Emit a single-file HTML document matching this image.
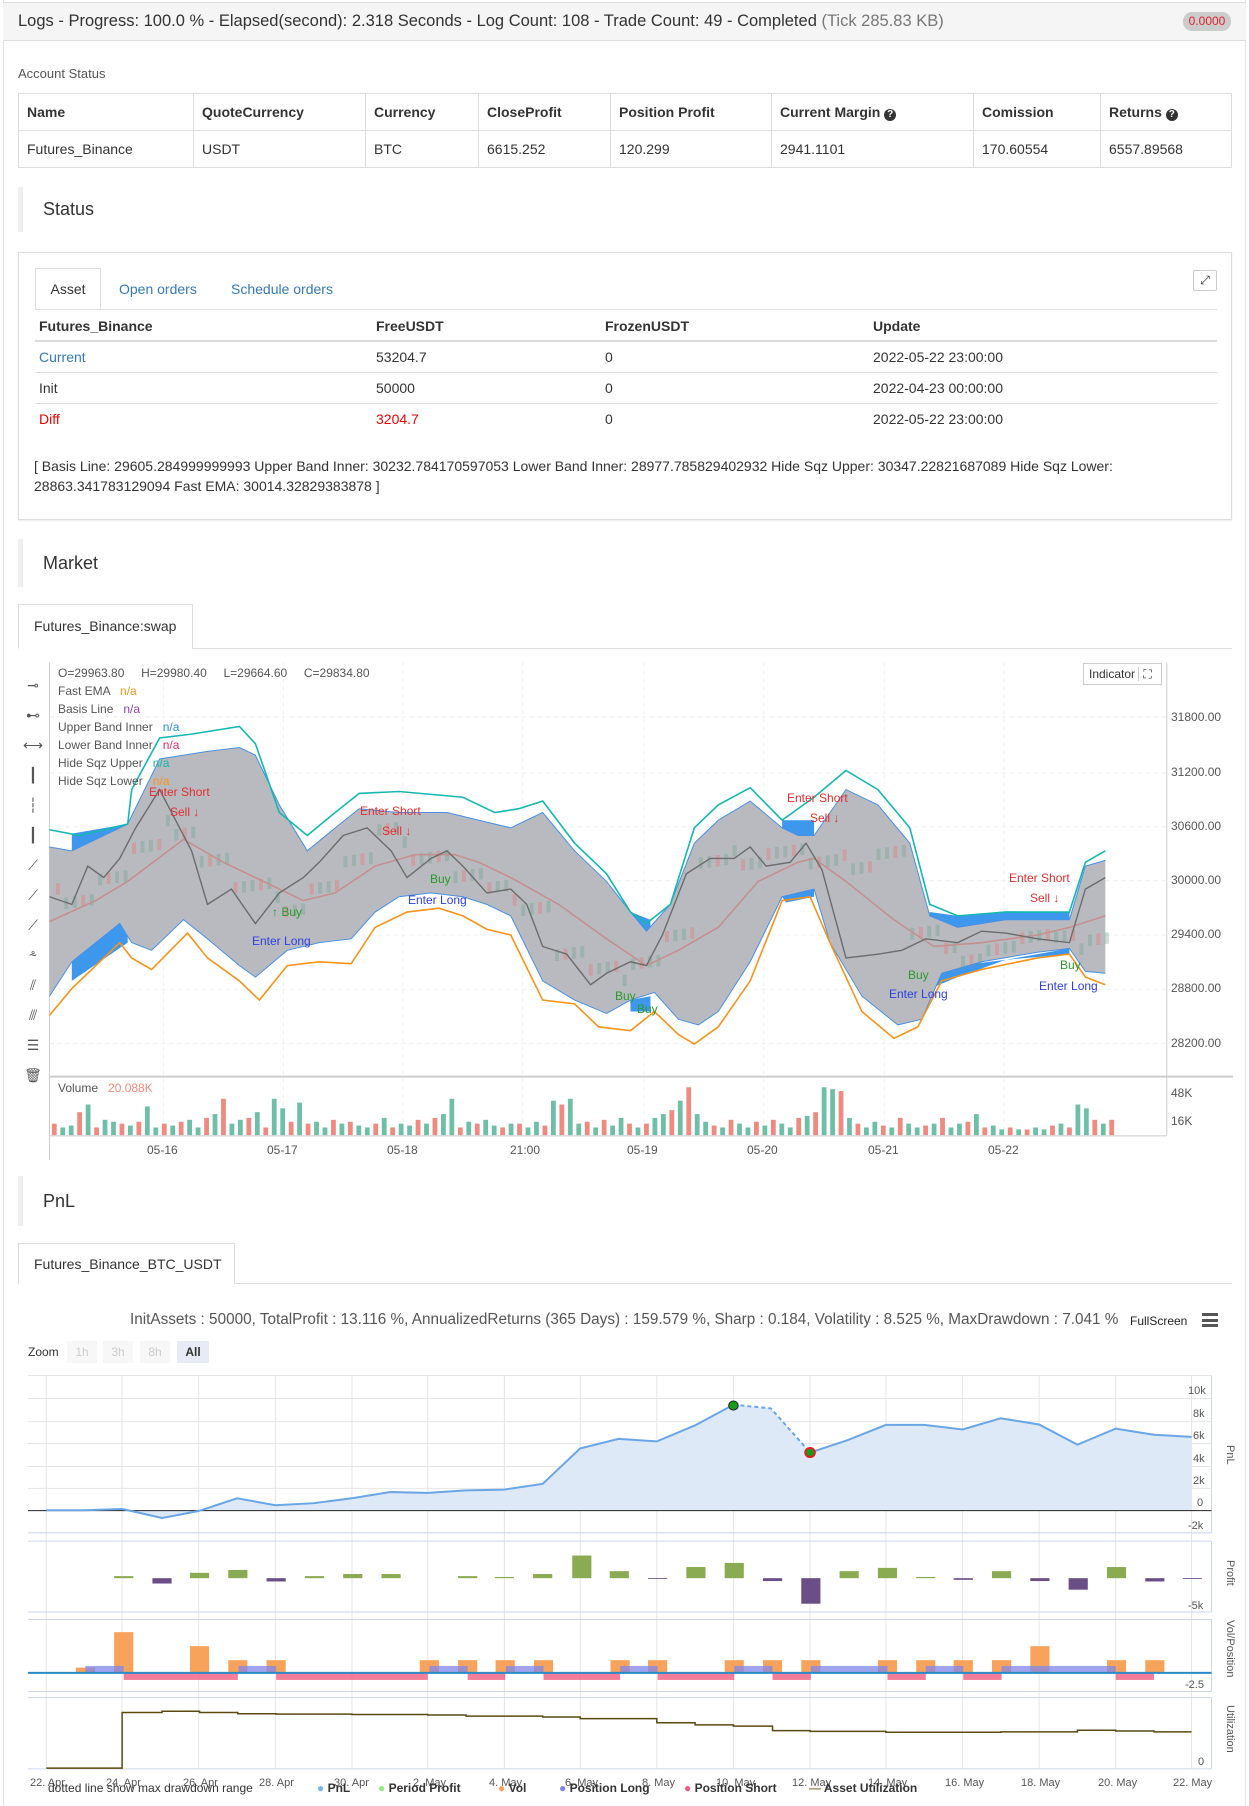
<!DOCTYPE html>
<html><head><meta charset="utf-8"><style>
*{box-sizing:border-box;margin:0;padding:0}
html,body{overflow:hidden}
body{width:1249px;height:1806px;position:relative;font-family:"Liberation Sans",Arial,sans-serif;color:#333;background:#fff;font-size:14px}
.a{position:absolute;white-space:nowrap}
table{border-collapse:collapse}
.t1{position:absolute;left:18px;top:93px;width:1214px;border:1px solid #ddd;font-size:14px}
.t1 td{border:1px solid #ddd;height:37px;padding-left:8px}
.t1 tr:first-child td{font-weight:bold}
.hd{position:absolute;left:18px;width:1214px;border-left:5px solid #eee;font-size:18px;padding-left:20px}
.cl{font-size:12px;color:#555}
.ax{font-size:12px;color:#555}
.xl{position:absolute;top:1777px;font-size:11px;color:#555;white-space:nowrap}
.lg{position:absolute;top:1781px;font-size:12px;font-weight:bold;color:#333;white-space:nowrap}
</style></head><body>
<div class="a" style="left:3px;top:0;width:1243px;height:1806px;border-left:1px solid #e3e3e3;border-right:1px solid #e3e3e3"></div>
<div class="a" style="left:3px;top:2px;width:1243px;height:39px;background:#f5f5f5;border-bottom:1px solid #ddd;border-top:1px solid #ddd"></div>
<div class="a" style="left:18px;top:12px;font-size:16.5px;color:#333">Logs - Progress: 100.0 % - Elapsed(second): 2.318 Seconds - Log Count: 108 - Trade Count: 49 - Completed <span style="color:#777">(Tick 285.83 KB)</span></div>
<div class="a" style="left:1183px;top:12px;width:48px;height:19px;background:#ccc;border-radius:9px;color:#d9262e;font-size:12px;text-align:center;line-height:19px">0.0000</div>
<div class="a" style="left:18px;top:66px;font-size:13px;color:#555">Account Status</div>
<table class="t1"><tr><td style="width:175px">Name</td><td style="width:172px">QuoteCurrency</td><td style="width:113px">Currency</td><td style="width:132px">CloseProfit</td><td style="width:161px">Position Profit</td><td style="width:202px">Current Margin <span style="display:inline-block;width:12px;height:12px;border-radius:6px;background:#333;color:#fff;font-size:10px;text-align:center;line-height:12px">?</span></td><td style="width:127px">Comission</td><td>Returns <span style="display:inline-block;width:12px;height:12px;border-radius:6px;background:#333;color:#fff;font-size:10px;text-align:center;line-height:12px">?</span></td></tr>
<tr><td>Futures_Binance</td><td>USDT</td><td>BTC</td><td>6615.252</td><td>120.299</td><td>2941.1101</td><td>170.60554</td><td>6557.89568</td></tr></table>
<div class="hd" style="top:187px;height:45px;line-height:45px">Status</div>
<div class="a" style="left:18px;top:252px;width:1214px;height:268px;border:1px solid #ddd;box-shadow:0 1px 2px rgba(0,0,0,.08)"></div>
<div class="a" style="left:35px;top:268px;width:66px;height:42px;border:1px solid #ddd;border-bottom:1px solid #fff;background:#fff;text-align:center;line-height:40px">Asset</div>
<div class="a" style="left:35px;top:309px;width:1182px;border-top:1px solid #ddd"></div>
<div class="a" style="left:119px;top:281px;color:#337ab7">Open orders</div>
<div class="a" style="left:231px;top:281px;color:#337ab7">Schedule orders</div>
<div class="a" style="left:1193px;top:270px;width:24px;height:21px;border:1px solid #ccc;border-radius:2px;font-size:12px;text-align:center;line-height:19px">⤢</div>
<div class="a" style="left:39px;top:318px;font-weight:bold">Futures_Binance</div>
<div class="a" style="left:376px;top:318px;font-weight:bold">FreeUSDT</div>
<div class="a" style="left:605px;top:318px;font-weight:bold">FrozenUSDT</div>
<div class="a" style="left:873px;top:318px;font-weight:bold">Update</div>
<div class="a" style="left:35px;top:340px;width:1182px;border-top:2px solid #ddd"></div>
<div class="a" style="left:39px;top:349px;color:#337ab7">Current</div><div class="a" style="left:376px;top:349px">53204.7</div><div class="a" style="left:605px;top:349px">0</div><div class="a" style="left:873px;top:349px">2022-05-22 23:00:00</div>
<div class="a" style="left:35px;top:372px;width:1182px;border-top:1px solid #ddd"></div>
<div class="a" style="left:39px;top:380px">Init</div><div class="a" style="left:376px;top:380px">50000</div><div class="a" style="left:605px;top:380px">0</div><div class="a" style="left:873px;top:380px">2022-04-23 00:00:00</div>
<div class="a" style="left:35px;top:403px;width:1182px;border-top:1px solid #ddd"></div>
<div class="a" style="left:39px;top:411px;color:#e00">Diff</div><div class="a" style="left:376px;top:411px;color:#e00">3204.7</div><div class="a" style="left:605px;top:411px">0</div><div class="a" style="left:873px;top:411px">2022-05-22 23:00:00</div>
<div class="a" style="left:34px;top:456px;font-size:14px;line-height:20px">[ Basis Line: 29605.284999999993 Upper Band Inner: 30232.784170597053 Lower Band Inner: 28977.785829402932 Hide Sqz Upper: 30347.22821687089 Hide Sqz Lower:<br>28863.341783129094 Fast EMA: 30014.32829383878 ]</div>
<div class="hd" style="top:539px;height:48px;line-height:48px">Market</div>
<div class="a" style="left:18px;top:604px;width:175px;height:45px;border:1px solid #ddd;border-bottom:1px solid #fff;background:#fff;line-height:43px;padding-left:15px">Futures_Binance:swap</div>
<div class="a" style="left:192px;top:648px;width:1040px;border-top:1px solid #ddd"></div>

<svg class="a" style="left:0;top:560px" width="1249" height="600" viewBox="0 0 1565 1568" preserveAspectRatio="none">
<g stroke="#eee" stroke-dasharray="4 4">
<line x1="62" x2="1462" y1="410" y2="410" vector-effect="non-scaling-stroke"/><line x1="62" x2="1462" y1="557" y2="557" vector-effect="non-scaling-stroke"/><line x1="62" x2="1462" y1="697" y2="697" vector-effect="non-scaling-stroke"/><line x1="62" x2="1462" y1="838" y2="838" vector-effect="non-scaling-stroke"/><line x1="62" x2="1462" y1="980" y2="980" vector-effect="non-scaling-stroke"/><line x1="62" x2="1462" y1="1122" y2="1122" vector-effect="non-scaling-stroke"/><line x1="62" x2="1462" y1="1264" y2="1264" vector-effect="non-scaling-stroke"/>
<line x1="205" x2="205" y1="268" y2="1505" vector-effect="non-scaling-stroke"/><line x1="355" x2="355" y1="268" y2="1505" vector-effect="non-scaling-stroke"/><line x1="505" x2="505" y1="268" y2="1505" vector-effect="non-scaling-stroke"/><line x1="655" x2="655" y1="268" y2="1505" vector-effect="non-scaling-stroke"/><line x1="807" x2="807" y1="268" y2="1505" vector-effect="non-scaling-stroke"/><line x1="957" x2="957" y1="268" y2="1505" vector-effect="non-scaling-stroke"/><line x1="1108" x2="1108" y1="268" y2="1505" vector-effect="non-scaling-stroke"/><line x1="1258" x2="1258" y1="268" y2="1505" vector-effect="non-scaling-stroke"/>
</g>
<line x1="62" x2="62" y1="268" y2="1568" stroke="#ccc" vector-effect="non-scaling-stroke"/>
<line x1="1462" x2="1462" y1="268" y2="1505" stroke="#ccc" vector-effect="non-scaling-stroke"/>
<line x1="62" x2="1545" y1="1350" y2="1350" stroke="#ccc" stroke-width="2" vector-effect="non-scaling-stroke"/>
<line x1="62" x2="1462" y1="1505" y2="1505" stroke="#ccc" vector-effect="non-scaling-stroke"/>
<polygon fill="#3d97ec" points="90,715 160,690 160,745 90,770"/>
<polygon fill="#3d97ec" points="90,1050 120,1000 150,950 160,950 160,1000 90,1100"/>
<polygon fill="#3d97ec" points="790,920 815,940 815,985 790,960"/>
<polygon fill="#3d97ec" points="790,1150 815,1140 815,1180 790,1180"/>
<polygon fill="#3d97ec" points="980,680 1020,680 1020,725 980,720"/>
<polygon fill="#3d97ec" points="980,880 1020,850 1020,880 985,895"/>
<polygon fill="#3d97ec" points="1165,920 1200,930 1260,918 1340,920 1340,942 1260,940 1200,970 1165,950"/>
<polygon fill="#3d97ec" points="1165,1090 1200,1060 1260,1045 1340,1015 1340,1030 1260,1045 1200,1090 1165,1120"/>
<polygon fill="#b8bac0" points="62,750 90,760 160,690 200,520 260,500 300,490 320,510 350,640 385,760 420,700 450,650 500,660 560,660 600,680 640,700 680,660 720,760 760,840 790,920 810,970 840,900 870,740 900,680 940,630 980,700 1000,720 1020,720 1060,600 1100,640 1140,740 1165,930 1200,960 1260,940 1340,940 1360,800 1385,785 1385,1080 1360,1075 1340,1015 1300,1025 1230,1050 1180,1080 1155,1200 1125,1215 1080,1140 1040,1000 1020,860 980,880 940,1050 900,1180 875,1215 850,1200 820,1130 790,1150 760,1185 720,1150 680,1100 640,930 610,900 580,880 540,870 500,880 470,920 440,990 400,1000 360,1020 320,1090 300,1060 260,990 230,940 190,1020 165,1000 150,950 120,1000 90,1050 62,1140"/>
<g id="cand"></g>
<g fill="none">
<polyline stroke="#4a90e2" stroke-width="1" vector-effect="non-scaling-stroke" points="62,750 90,760 160,690 200,520 260,500 300,490 320,510 350,640 385,760 420,700 450,650 500,660 560,660 600,680 640,700 680,660 720,760 760,840 790,920 810,970 840,900 870,740 900,680 940,630 980,700 1000,720 1020,720 1060,600 1100,640 1140,740 1165,930 1200,960 1260,940 1340,940 1360,800 1385,785"/>
<polyline stroke="#4a90e2" stroke-width="1" vector-effect="non-scaling-stroke" points="62,1140 90,1050 120,1000 150,950 165,1000 190,1020 230,940 260,990 300,1060 320,1090 360,1020 400,1000 440,990 470,920 500,880 540,870 580,880 610,900 640,930 680,1100 720,1150 760,1185 790,1150 820,1130 850,1200 875,1215 900,1180 940,1050 980,880 1020,860 1040,1000 1080,1140 1125,1215 1155,1200 1180,1080 1230,1050 1300,1025 1340,1015 1360,1075 1385,1080"/>
<polyline stroke="#14b8b0" stroke-width="1.6" vector-effect="non-scaling-stroke" points="62,705 100,720 160,690 165,600 200,465 240,455 300,435 320,480 350,660 385,720 420,660 450,610 500,605 580,620 620,660 650,650 680,630 720,740 760,820 790,920 810,950 840,900 870,700 900,640 940,595 980,680 1020,620 1060,550 1100,600 1140,700 1165,900 1200,930 1260,920 1340,920 1360,790 1385,760"/>
<polyline stroke="#f7931a" stroke-width="1.6" vector-effect="non-scaling-stroke" points="62,1190 90,1120 120,1060 150,1000 165,1040 190,1070 235,975 260,1040 300,1100 325,1150 360,1060 400,1050 440,1055 470,960 510,920 550,910 580,930 610,965 640,980 680,1150 720,1160 750,1220 790,1230 820,1180 850,1240 870,1265 900,1220 940,1100 980,890 1015,880 1040,1000 1080,1180 1120,1250 1150,1220 1180,1100 1230,1070 1300,1040 1340,1030 1360,1090 1385,1110"/>
<polyline stroke="#c49090" stroke-width="1.6" vector-effect="non-scaling-stroke" points="62,945 120,890 160,840 230,730 280,790 340,850 380,890 420,870 470,800 520,770 570,770 600,790 640,830 700,900 760,990 810,1060 850,1020 900,960 950,840 1000,790 1020,780 1060,840 1120,940 1170,1010 1230,1000 1300,980 1340,960 1385,930"/>
<polyline stroke="#6c6c6c" stroke-width="1.4" vector-effect="non-scaling-stroke" points="62,880 90,900 110,800 130,830 150,780 170,700 200,600 220,680 240,760 260,900 290,860 320,950 350,870 380,830 400,790 430,720 460,700 490,760 510,830 540,780 560,760 580,800 610,870 640,860 660,900 680,1010 710,1030 740,1110 760,1080 790,1050 810,1060 830,980 860,820 890,780 920,780 940,750 960,800 990,790 1010,740 1030,810 1060,1040 1100,1030 1130,1020 1160,990 1200,1000 1230,970 1260,975 1300,990 1340,1000 1360,860 1385,830"/>
</g>
<g id="vol"></g>
</svg>
<div class="a cl" style="left:58px;top:666px">O=29963.80&nbsp;&nbsp;&nbsp;&nbsp;&nbsp;H=29980.40&nbsp;&nbsp;&nbsp;&nbsp;&nbsp;L=29664.60&nbsp;&nbsp;&nbsp;&nbsp;&nbsp;C=29834.80</div>
<div class="a cl" style="left:58px;top:684px">Fast EMA &nbsp;&nbsp;<span style="color:#f7931a">n/a</span></div>
<div class="a cl" style="left:58px;top:702px">Basis Line &nbsp;&nbsp;<span style="color:#8e44ad">n/a</span></div>
<div class="a cl" style="left:58px;top:720px">Upper Band Inner &nbsp;&nbsp;<span style="color:#2a8bf2">n/a</span></div>
<div class="a cl" style="left:58px;top:738px">Lower Band Inner &nbsp;&nbsp;<span style="color:#e0306a">n/a</span></div>
<div class="a cl" style="left:58px;top:756px">Hide Sqz Upper &nbsp;&nbsp;<span style="color:#14b8b0">n/a</span></div>
<div class="a cl" style="left:58px;top:774px">Hide Sqz Lower &nbsp;&nbsp;<span style="color:#f7931a">n/a</span></div>
<div class="a" style="left:1083px;top:663px;width:79px;height:22px;border:1px solid #ccc;font-size:12px;line-height:20px;padding-left:5px;background:#fff">Indicator <span style="border-left:1px solid #ccc;padding-left:4px">⛶</span></div>
<div class="a ax" style="left:1171px;top:710px">31800.00</div><div class="a ax" style="left:1171px;top:765px">31200.00</div><div class="a ax" style="left:1171px;top:819px">30600.00</div><div class="a ax" style="left:1171px;top:873px">30000.00</div><div class="a ax" style="left:1171px;top:927px">29400.00</div><div class="a ax" style="left:1171px;top:981px">28800.00</div><div class="a ax" style="left:1171px;top:1036px">28200.00</div>
<div class="a ax" style="left:1171px;top:1086px">48K</div><div class="a ax" style="left:1171px;top:1114px">16K</div>
<div class="a ax" style="left:58px;top:1081px">Volume &nbsp;&nbsp;<span style="color:#ef8a80">20.088K</span></div>
<div class="a ax" style="left:147px;top:1143px">05-16</div><div class="a ax" style="left:267px;top:1143px">05-17</div><div class="a ax" style="left:387px;top:1143px">05-18</div><div class="a ax" style="left:510px;top:1143px">21:00</div><div class="a ax" style="left:627px;top:1143px">05-19</div><div class="a ax" style="left:747px;top:1143px">05-20</div><div class="a ax" style="left:868px;top:1143px">05-21</div><div class="a ax" style="left:988px;top:1143px">05-22</div>
<div class="a" style="font-size:12px;color:#e03030;left:149px;top:785px">Enter Short</div>
<div class="a" style="font-size:12px;color:#e03030;left:170px;top:805px">Sell ↓</div>
<div class="a" style="font-size:12px;color:#e03030;left:360px;top:804px">Enter Short</div>
<div class="a" style="font-size:12px;color:#e03030;left:382px;top:824px">Sell ↓</div>
<div class="a" style="font-size:12px;color:#e03030;left:787px;top:791px">Enter Short</div>
<div class="a" style="font-size:12px;color:#e03030;left:810px;top:811px">Sell ↓</div>
<div class="a" style="font-size:12px;color:#e03030;left:1009px;top:871px">Enter Short</div>
<div class="a" style="font-size:12px;color:#e03030;left:1030px;top:891px">Sell ↓</div>
<div class="a" style="font-size:12px;color:#2a9a2a;left:272px;top:905px">↑ Buy</div>
<div class="a" style="font-size:12px;color:#3040e0;left:252px;top:934px">Enter Long</div>
<div class="a" style="font-size:12px;color:#2a9a2a;left:430px;top:872px">Buy</div>
<div class="a" style="font-size:12px;color:#3040e0;left:408px;top:893px">Enter Long</div>
<div class="a" style="font-size:12px;color:#2a9a2a;left:615px;top:989px">Buy</div>
<div class="a" style="font-size:12px;color:#2a9a2a;left:637px;top:1002px">Buy</div>
<div class="a" style="font-size:12px;color:#2a9a2a;left:908px;top:968px">Buy</div>
<div class="a" style="font-size:12px;color:#3040e0;left:889px;top:987px">Enter Long</div>
<div class="a" style="font-size:12px;color:#2a9a2a;left:1060px;top:958px">Buy</div>
<div class="a" style="font-size:12px;color:#3040e0;left:1039px;top:979px">Enter Long</div>
<div class="a" style="left:22px;top:670px;font-size:14px;color:#555;line-height:30px;width:22px;text-align:center">⊸<br>⊷<br>⟷<br>┃<br>┆<br>┃<br>⟋<br>⟋<br>⟋<br>⸛<br>⫽<br>⫻<br>☰<br>🗑</div>

<div class="hd" style="top:1176px;height:50px;line-height:50px">PnL</div>
<div class="a" style="left:18px;top:1243px;width:217px;height:42px;border:1px solid #ddd;border-bottom:1px solid #fff;background:#fff;line-height:40px;padding-left:15px">Futures_Binance_BTC_USDT</div>
<div class="a" style="left:234px;top:1283px;width:998px;border-top:1px solid #ddd"></div>
<div class="a" style="left:130px;top:1311px;font-size:15.3px;color:#555">InitAssets : 50000, TotalProfit : 13.116 %, AnnualizedReturns (365 Days) : 159.579 %, Sharp : 0.184, Volatility : 8.525 %, MaxDrawdown : 7.041 %</div>
<div class="a" style="left:1130px;top:1314px;font-size:12px;color:#222">FullScreen</div>
<div class="a" style="left:1202px;top:1313px;width:16px;height:14px;border-top:3px solid #555;border-bottom:3px solid #555"><div style="margin-top:3px;border-top:3px solid #555"></div></div>
<div class="a" style="left:28px;top:1345px;font-size:12px;color:#333">Zoom</div>
<div class="a" style="left:67px;top:1341px;width:30px;height:22px;background:#f7f7f7;color:#ccc;font-size:12px;text-align:center;line-height:22px">1h</div>
<div class="a" style="left:103px;top:1341px;width:30px;height:22px;background:#f7f7f7;color:#ccc;font-size:12px;text-align:center;line-height:22px">3h</div>
<div class="a" style="left:140px;top:1341px;width:30px;height:22px;background:#f7f7f7;color:#ccc;font-size:12px;text-align:center;line-height:22px">8h</div>
<div class="a" style="left:177px;top:1341px;width:32px;height:22px;background:#e6ebf5;color:#333;font-size:12px;font-weight:bold;text-align:center;line-height:22px">All</div>
<svg class="a" style="left:0;top:1160px" width="1249" height="646" viewBox="0 0 1565 1568" preserveAspectRatio="none">
<g stroke="#e6e6e6" fill="none">
<path vector-effect="non-scaling-stroke" d="M58 523V1478M153 523V1478M249 523V1478M345 523V1478M441 523V1478M536 523V1478M632 523V1478M727 523V1478M823 523V1478M919 523V1478M1015 523V1478M1110 523V1478M1206 523V1478M1302 523V1478M1398 523V1478M1493 523V1478"/>
<path vector-effect="non-scaling-stroke" d="M35 523H1518M35 579H1518M35 635H1518M35 688H1518M35 744H1518M35 797H1518M35 905H1518"/>
</g>
<g stroke="#ccd6eb" fill="none"><path vector-effect="non-scaling-stroke" d="M1518 523V905M1518 925V1097M1518 1115V1290M1518 1305V1478M35 905H1518M35 1097H1518M35 1290H1518M35 1478H1518M35 925H1518M35 1115H1518M35 1305H1518"/></g>
<polygon fill="#dde9f7" points="58,850 105,850 153,847 203,869 249,852 297,821 345,838 393,833 441,821 489,806 536,808 584,802 632,800 680,786 727,700 775,677 823,683 871,644 919,594 966,603 1015,710 1062,680 1110,643 1158,643 1206,654 1254,627 1302,642 1350,691 1398,652 1446,667 1493,672 1493,851 58,851"/>
<line x1="35" x2="1518" y1="851" y2="851" stroke="#222" vector-effect="non-scaling-stroke"/>
<polyline fill="none" stroke="#6aa5e6" stroke-width="2" vector-effect="non-scaling-stroke" points="58,850 105,850 153,847 203,869 249,852 297,821 345,838 393,833 441,821 489,806 536,808 584,802 632,800 680,786 727,700 775,677 823,683 871,644 919,594"/>
<polyline fill="none" stroke="#6aa5e6" stroke-width="2" stroke-dasharray="4 3" vector-effect="non-scaling-stroke" points="919,594 966,603 1015,710"/>
<polyline fill="none" stroke="#6aa5e6" stroke-width="2" vector-effect="non-scaling-stroke" points="1015,710 1062,680 1110,643 1158,643 1206,654 1254,627 1302,642 1350,691 1398,652 1446,667 1493,672"/>
<ellipse cx="919" cy="596" rx="6" ry="11" fill="#1a9a1a" stroke="#222" vector-effect="non-scaling-stroke"/>
<ellipse cx="1015" cy="710" rx="6" ry="11" fill="#1a9a1a" stroke="#d22" stroke-width="2" vector-effect="non-scaling-stroke"/>
<g id="prof"></g>
<g id="volp"></g>
<line x1="35" x2="1518" y1="1245" y2="1245" stroke="#2a8bc8" stroke-width="2" vector-effect="non-scaling-stroke"/>
<polyline fill="none" stroke="#5a4a10" stroke-width="1.5" vector-effect="non-scaling-stroke" points="58,1476 153,1476 153,1341 203,1341 203,1338 250,1338 250,1341 298,1341 298,1344 346,1344 346,1345 441,1345 441,1346 536,1346 536,1347 584,1347 584,1350 680,1350 680,1352 727,1352 727,1356 823,1356 823,1366 871,1366 871,1371 919,1371 919,1374 968,1374 968,1385 1015,1385 1015,1387 1110,1387 1110,1389 1254,1389 1254,1388 1350,1388 1350,1384 1398,1384 1398,1386 1446,1386 1446,1388 1493,1388"/>
</svg>
<div class="a ax" style="left:1188px;top:1385px;font-size:11px">10k</div><div class="a ax" style="left:1193px;top:1408px;font-size:11px">8k</div><div class="a ax" style="left:1193px;top:1430px;font-size:11px">6k</div><div class="a ax" style="left:1193px;top:1453px;font-size:11px">4k</div><div class="a ax" style="left:1193px;top:1475px;font-size:11px">2k</div><div class="a ax" style="left:1197px;top:1497px;font-size:11px">0</div><div class="a ax" style="left:1188px;top:1520px;font-size:11px">-2k</div>
<div class="a ax" style="left:1188px;top:1600px;font-size:11px">-5k</div><div class="a ax" style="left:1185px;top:1679px;font-size:11px">-2.5</div><div class="a ax" style="left:1198px;top:1756px;font-size:11px">0</div>
<div class="a ax" style="left:1236px;top:1445px;font-size:11px;transform:rotate(90deg);transform-origin:left top">PnL</div>
<div class="a ax" style="left:1236px;top:1560px;font-size:11px;transform:rotate(90deg);transform-origin:left top">Profit</div>
<div class="a ax" style="left:1236px;top:1620px;font-size:11px;transform:rotate(90deg);transform-origin:left top">Vol/Position</div>
<div class="a ax" style="left:1236px;top:1705px;font-size:11px;transform:rotate(90deg);transform-origin:left top">Utilization</div>
<div class="xl" style="left:30px">22. Apr</div><div class="xl" style="left:106px">24. Apr</div><div class="xl" style="left:183px">26. Apr</div><div class="xl" style="left:259px">28. Apr</div><div class="xl" style="left:334px">30. Apr</div><div class="xl" style="left:413px">2. May</div><div class="xl" style="left:489px">4. May</div><div class="xl" style="left:565px">6. May</div><div class="xl" style="left:642px">8. May</div><div class="xl" style="left:716px">10. May</div><div class="xl" style="left:792px">12. May</div><div class="xl" style="left:868px">14. May</div><div class="xl" style="left:945px">16. May</div><div class="xl" style="left:1021px">18. May</div><div class="xl" style="left:1098px">20. May</div><div class="xl" style="left:1173px">22. May</div>
<div class="a" style="left:48px;top:1781px;font-size:12px;color:#333">dotted line show max drawdown range</div>
<div class="lg" style="left:317px"><span style="color:#7cb5ec">●</span> PnL</div>
<div class="lg" style="left:378px"><span style="color:#90ed7d">●</span> Period Profit</div>
<div class="lg" style="left:498px"><span style="color:#f7a35c">●</span> Vol</div>
<div class="lg" style="left:559px"><span style="color:#8085e9">●</span> Position Long</div>
<div class="lg" style="left:684px"><span style="color:#f15c80">●</span> Position Short</div>
<div class="lg" style="left:809px"><span style="color:#8a7a50">—</span> Asset Utilization</div>
<script>
var ns="http://www.w3.org/2000/svg";
function R(g,x,y,w,h,c,o){var r=document.createElementNS(ns,"rect");r.setAttribute("x",x);r.setAttribute("y",y);r.setAttribute("width",w);r.setAttribute("height",h);r.setAttribute("fill",c);if(o)r.setAttribute("opacity",o);g.appendChild(r);}
var v=document.getElementById("vol");
var hs=[30,20,25,60,80,20,40,35,30,25,35,75,20,30,25,35,40,20,45,55,95,30,40,45,60,20,95,70,35,85,30,35,20,40,30,35,25,20,30,45,20,30,25,40,30,45,55,95,20,35,30,40,25,20,30,30,20,35,25,90,80,95,30,35,20,40,25,45,30,20,30,45,55,65,90,125,55,35,25,20,40,30,20,35,25,40,30,20,45,50,60,125,120,115,45,30,20,35,25,20,45,30,20,25,30,45,20,30,35,55,20,25,15,20,15,15,20,15,25,30,20,80,70,40,30,40];
for(var i=0;i<hs.length;i++){var x=65+i*10.6;if(x>1395)break;var red=(i*7%5)<2;R(v,x,1503-hs[i],6,hs[i],red?"#ef8a80":"#6fbfa8");}
var c=document.getElementById("cand");
for(var i=0;i<125;i++){var x=70+i*10.6;if(x>1390)break;var y=[880,830,760,700,780,860,900,850,790,720,770,830,870,900,1030,1080,1040,980,800,780,760,800,790,760,980,1030,1010,990,1000,980][Math.floor(i/4.2)%30]||900;y+=((i*37)%40)-20;R(c,x,y-15,5,30,(i%3==0)?"#e87070":"#6aa08a",0.35);}
var p=document.getElementById("prof");
var pb=[[155,1010,5,1],[203,1015,13,0],[250,1002,13,1],[298,995,20,1],[346,1015,8,0],[394,1010,5,1],[442,1005,10,1],[490,1005,10,1],[586,1010,5,1],[632,1012,3,1],[680,1005,10,1],[729,960,55,1],[776,998,17,1],[824,1015,2,0],[872,988,27,1],[920,978,37,1],[968,1015,7,0],[1016,1015,62,0],[1064,998,17,1],[1112,990,25,1],[1160,1012,3,1],[1207,1015,4,0],[1255,998,17,1],[1303,1015,7,0],[1351,1015,28,0],[1399,988,27,1],[1447,1015,8,0],[1494,1015,2,0]];
pb.forEach(function(b){R(p,b[0]-12,b[1],24,b[2],b[3]?"#8bab52":"#6a4f86");});
var q=document.getElementById("volp");
[[107,1232],[155,1146],[250,1180],[298,1214],[346,1214],[538,1214],[586,1214],[633,1214],[681,1214],[777,1214],[824,1214],[920,1214],[968,1214],[1016,1214],[1112,1214],[1160,1214],[1207,1214],[1255,1214],[1303,1180],[1399,1214],[1447,1214]].forEach(function(b){R(q,b[0]-12,b[1],24,1245-b[1],"#f7a35c");});
[[107,155],[299,346],[538,586],[634,681],[777,824],[920,968],[1016,1112],[1160,1207],[1255,1398]].forEach(function(b){R(q,b[0],1228,b[1]-b[0],17,"#8085e9",0.75);});
[[155,298],[346,536],[586,633],[681,777],[824,920],[968,1016],[1112,1160],[1207,1255],[1398,1446]].forEach(function(b){R(q,b[0],1245,b[1]-b[0],17,"#f15c80",0.8);});
</script>
</body></html>
